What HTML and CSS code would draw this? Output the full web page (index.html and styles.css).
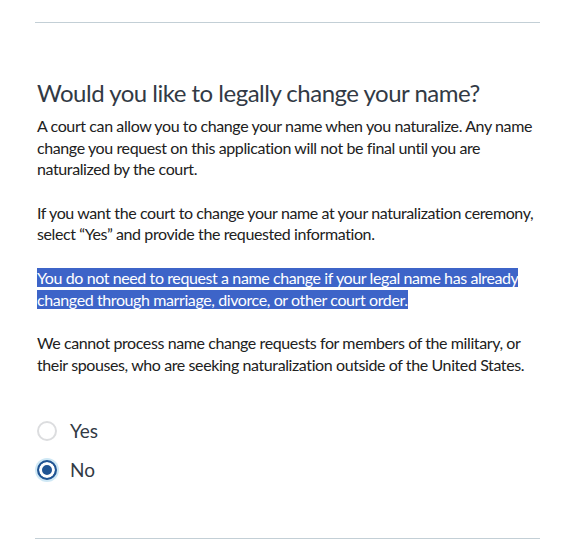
FILE: index.html
```html
<!DOCTYPE html>
<html lang="en">

<head>
    <meta charset="UTF-8">
    <meta name="viewport" content="width=device-width, initial-scale=1.0">
    <title>Name change</title>

    <link rel="stylesheet" href="styles.css">

</head>

<body>
    <div id="page">
        <hr class="rule">

        <div class="question">
            <h2 class="title">Would you like to legally change your name?</h2>
            <p>A court can allow you to change your name when you naturalize. Any name change you request on this application will not be final until you are naturalized by the court.</p>
            <p>If you want the court to change your name at your naturalization ceremony, select “Yes” and provide the requested information.</p>
            <p><span class="picked">You do not need to request a name change if your legal name has already changed through marriage, divorce, or other court order.</span></p>
            <p>We cannot process name change requests for members of the military, or their spouses, who are seeking naturalization outside of the United States.</p>

            <!-- yes / no choice -->
            <div class="choices">
                <label class="choice">
                    <input type="radio" name="nameChange" value="yes">
                    <span class="dot"></span>
                    Yes
                </label>
                <label class="choice">
                    <input type="radio" name="nameChange" value="no" checked>
                    <span class="dot"></span>
                    No
                </label>
            </div>
        </div>

        <hr class="rule">
    </div>
</body>

</html>
```
FILE: styles.css
```css
* {
    font-family: 'Source Sans Pro', Lato, 'Open Sans', sans-serif;
    box-sizing: border-box;
}

body {
    margin: 0;
    background-color: #fff;
    color: #212121;
}

#page {
    width: 505px;
    margin: 0 auto 0 35px;
    padding-top: 22px;
}

.rule {
    border: none;
    border-top: 1px solid #c3cfd6;
    margin: 0;
}

.question {
    padding: 54px 0 0 2px;
    height: 515px;
}

.title {
    font-size: 24px;
    font-weight: 400;
    color: #323a45;
    margin: 0 0 6px 0;
    line-height: 32px;
    letter-spacing: -0.5px;
}

p {
    font-size: 16px;
    line-height: 21.6px;
    letter-spacing: -0.4px;
    margin: 0 0 22px 0;
}

.picked {
    background-color: #3d64c8;
    color: #fff;
}

.choices {
    display: flex;
    flex-direction: column;
    gap: 16px;
    margin-top: 44px;
}

.choice {
    display: flex;
    align-items: center;
    gap: 13px;
    font-size: 19px;
    color: #323a45;
}

.choice input {
    display: none;
}

.dot {
    width: 20px;
    height: 20px;
    border-radius: 50%;
    border: 2px solid #dcdddf;
    background-color: #fff;
}

.choice input:checked + .dot {
    border-color: #205493;
    background-color: #205493;
    box-shadow: inset 0 0 0 3px #fff, 0 0 0 2px #cfe8f5;
}
```
